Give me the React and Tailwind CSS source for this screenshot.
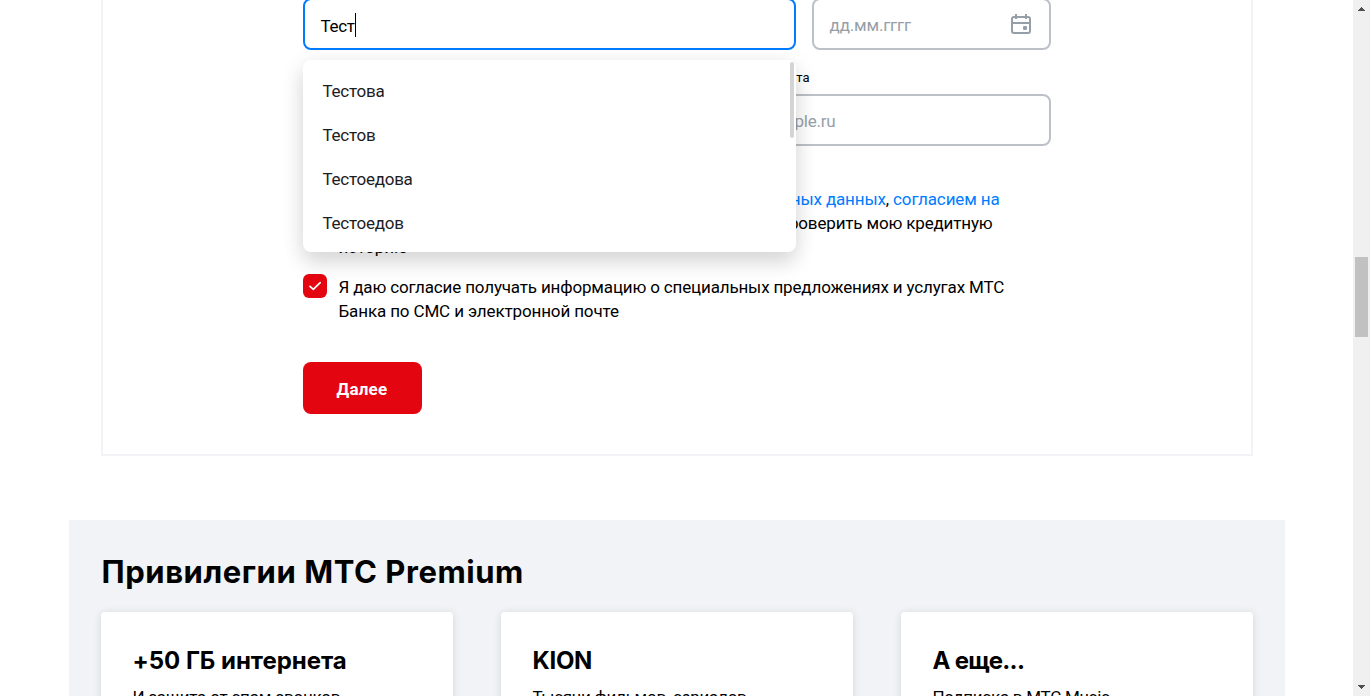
import React from "react";

const suggestions = ["Тестова", "Тестов", "Тестоедова", "Тестоедов"];

const privileges = [
  { title: "+50 ГБ интернета", text: "И защита от спам-звонков", titleClass: "tracking-[-0.03px]", textClass: "tracking-[-0.22px]" },
  { title: "KION", text: "Тысячи фильмов, сериалов", titleClass: "tracking-[-0.3px]", textClass: "tracking-[-0.26px]" },
  { title: "А еще...", text: "Подписка в МТС Music", titleClass: "tracking-[-0.7px]", textClass: "tracking-[-0.26px]" },
];

function CalendarIcon() {
  return (
    <svg width="24" height="24" viewBox="0 0 24 24" fill="none" stroke="#969fa8" strokeWidth="2">
      <rect x="3" y="5" width="18" height="16" rx="2" />
      <path d="M3 11h18M7 2v5M17 2v5" />
      <rect x="14" y="14" width="4" height="4" rx="1.3" fill="#969fa8" stroke="none" />
    </svg>
  );
}

function Checkbox() {
  return (
    <span className="-mt-px flex size-6 shrink-0 items-center justify-center rounded-md bg-[#e30611]">
      <svg width="24" height="24" viewBox="0 0 24 24" fill="none" stroke="#fff" strokeWidth="1.7" strokeLinecap="round" strokeLinejoin="round">
        <path d="M7 12.3l3.3 3.1L17.2 8.7" />
      </svg>
    </span>
  );
}

function Dropdown() {
  return (
    <div className="absolute top-[62px] left-0 z-10 h-48 w-[493px] rounded-lg bg-white pt-2.5 shadow-[0_12px_20px_rgba(0,0,0,0.1),0_4px_24px_rgba(0,0,0,0.09)]">
      <ul>
        {suggestions.map((s) => (
          <li key={s} className="flex h-11 items-center px-5 text-[17px] tracking-[-0.26px] text-[#1d2023]">
            {s}
          </li>
        ))}
      </ul>
      <div className="absolute top-0.5 right-0.5 h-[76px] w-1 rounded-full bg-[#d4d4d4]" />
    </div>
  );
}

function Form() {
  return (
    <section className="mx-auto flex h-[458px] w-[1152px] flex-col border-2 border-t-0 border-[#f2f3f7] px-[200px]">
      <div className="relative flex shrink-0 gap-4">
        <div className="flex h-[52px] w-[493px] items-center rounded-lg border-2 border-[#007cff] px-4 pt-1">
          <span className="pt-0.5 text-[17px] tracking-[-0.3px]">Тест</span>
          <span className="-mt-0.5 h-6 w-px bg-black" />
        </div>
        <div className="flex h-[52px] w-[239px] items-center justify-between rounded-lg border-2 border-[#bbc1c7] px-4">
          <span className="pt-1 text-[17px] tracking-[-0.2px] text-[#969fa8]">дд.мм.гггг</span>
          <CalendarIcon />
        </div>
        <Dropdown />
      </div>

      <div className="mt-[18px] flex shrink-0 gap-4">
        <div className="w-[366px]">
          <p className="h-5 text-sm leading-5">Почта</p>
          <div className="mt-1.5 h-[52px] rounded-lg border-2 border-[#bbc1c7]" />
        </div>
        <div className="w-[366px]">
          <p className="h-5 w-[125px] text-right text-[13px] leading-5 whitespace-nowrap">Электронная почта</p>
          <div className="mt-1.5 flex h-[52px] items-center rounded-lg border-2 border-[#bbc1c7] px-4">
            <span className="w-[133px] pt-1 text-right text-[17px] tracking-[-0.2px] whitespace-nowrap text-[#969fa8]">mail@example.ru</span>
          </div>
        </div>
      </div>

      <div className="mt-[41px] flex shrink-0 gap-3 text-[17px] leading-6">
        <Checkbox />
        <div className="w-[661px] whitespace-nowrap">
          <p className="flex justify-end">
            <span className="tracking-[-0.14px] whitespace-pre">
              Согласен с условиями <a className="text-[#007cff]">обработки персональных данных</a>,{" "}
              <a className="text-[#007cff]">согласием на</a>
            </span>
          </p>
          <p className="flex w-[654px] justify-end tracking-[-0.16px]">запрос в бюро кредитных историй и разрешаю проверить мою кредитную</p>
          <p>историю</p>
        </div>
      </div>

      <div className="mt-4 flex shrink-0 gap-3 text-[17px] leading-6">
        <Checkbox />
        <div className="whitespace-nowrap">
          <p className="tracking-[-0.16px]">Я даю согласие получать информацию о специальных предложениях и услугах МТС</p>
          <p className="tracking-[-0.13px]">Банка по СМС и электронной почте</p>
        </div>
      </div>

      <button className="mt-[39px] flex h-[52px] w-[119px] shrink-0 items-center justify-center rounded-lg bg-[#e30611] pt-[3px] text-[17px] font-bold tracking-[0.2px] text-white">
        Далее
      </button>
    </section>
  );
}

function Privileges() {
  return (
    <section className="mx-auto mt-16 h-[300px] w-[1216px] bg-[#f2f3f7] px-8 pt-8">
      <h2 className="h-10 pl-px font-[Inter,sans-serif] text-[31px] leading-10 font-bold tracking-[0.56px] whitespace-nowrap">Привилегии МТС Premium</h2>
      <div className="mt-5 flex gap-12">
        {privileges.map((p) => (
          <article key={p.title} className="h-[220px] w-[352px] rounded bg-white px-8 pt-[33px] shadow-[0_1px_8px_rgba(0,0,0,0.12)]">
            <h3 className={"h-8 font-[Inter,sans-serif] text-2xl leading-8 font-bold whitespace-nowrap " + p.titleClass}>{p.title}</h3>
            <p className={"mt-2 text-[17px] leading-6 whitespace-nowrap " + p.textClass}>{p.text}</p>
          </article>
        ))}
      </div>
    </section>
  );
}

function Scrollbar() {
  return (
    <aside className="flex h-full w-[17px] shrink-0 flex-col items-center bg-[#f0f0f0]">
      <svg width="7" height="4" viewBox="0 0 7 4" className="mt-[7px]" fill="#505050" shapeRendering="crispEdges">
        <path d="M3 0h1v1h1v1h1v1h1v1H0V3h1V2h1V1h1z" />
      </svg>
      <div className="mt-[246px] h-20 w-[13px] bg-[#c1c1c1]" />
      <svg width="7" height="4" viewBox="0 0 7 4" className="mt-auto mb-[7px]" fill="#505050" shapeRendering="crispEdges">
        <path d="M0 0h7v1H6v1H5v1H4v1H3V3H2V2H1V1H0z" />
      </svg>
    </aside>
  );
}

export default function App() {
  return (
    <div className="flex h-[696px] w-[1370px] overflow-hidden bg-white font-[Roboto,'Liberation_Sans',sans-serif] text-black">
      <main className="h-full w-[1353px] overflow-hidden">
        <div className="-mt-0.5">
          <Form />
          <Privileges />
        </div>
      </main>
      <Scrollbar />
    </div>
  );
}
